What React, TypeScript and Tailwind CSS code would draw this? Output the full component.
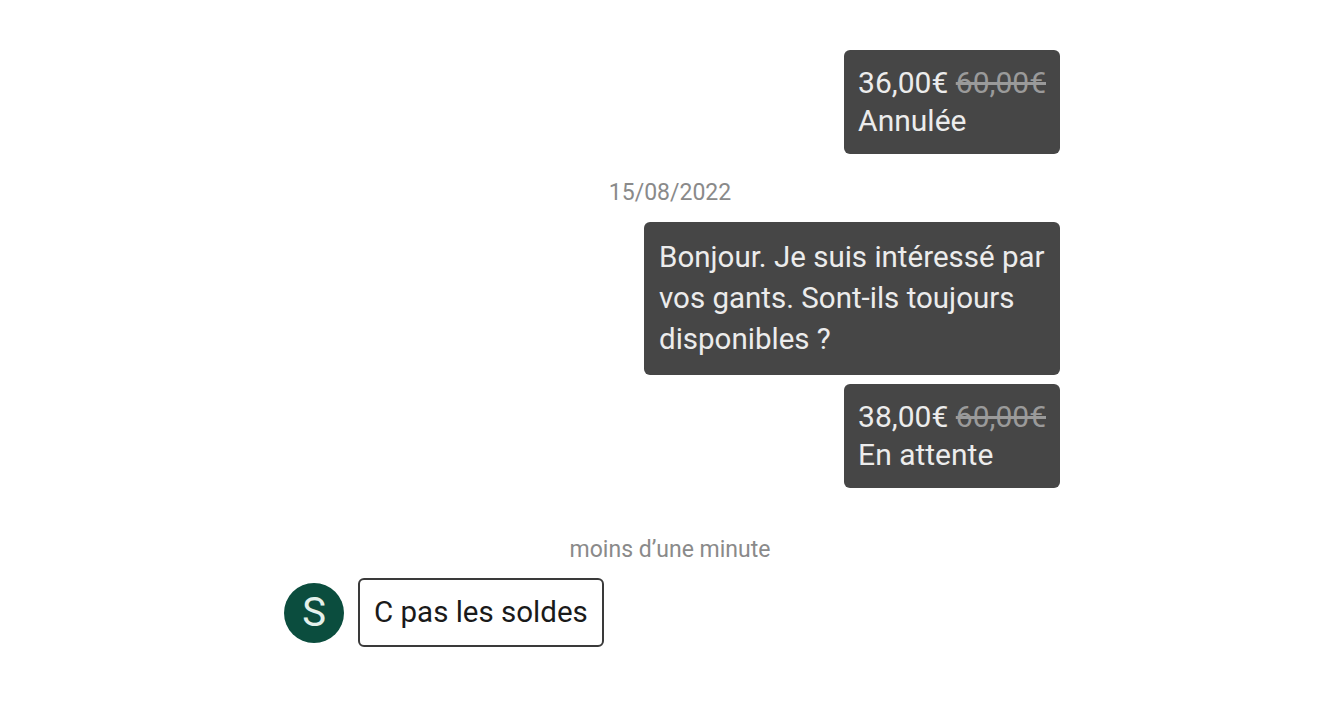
import React from 'react'

const font = { fontFamily: 'Roboto, "Noto Sans", sans-serif' }

function OfferBubble({ price, original, status }: { price: string; original: string; status: string }) {
  return (
    <div className="self-end rounded-md bg-[#464646] px-[14px] py-[14px] text-[30px] leading-[38px] text-[#ececec]">
      <div>
        {price} <span className="text-[#9a9a9a] line-through">{original}</span>
      </div>
      <div>{status}</div>
    </div>
  )
}

export default function App() {
  return (
    <div className="min-h-screen bg-white" style={font}>
      <div className="mx-auto flex w-[780px] flex-col pt-[50px]">
        <OfferBubble price="36,00€" original="60,00€" status="Annulée" />

        <div className="mt-[25px] text-center text-[23px] leading-[28px] text-[#8a8a8a]">15/08/2022</div>

        <div className="mt-[15px] max-w-[416px] self-end rounded-md bg-[#464646] px-[15px] py-[15px] text-[29.5px] leading-[41px] text-[#ececec]">
          Bonjour. Je suis intéressé par vos gants. Sont-ils toujours disponibles ?
        </div>

        <div className="mt-[9px] flex flex-col">
          <OfferBubble price="38,00€" original="60,00€" status="En attente" />
        </div>

        <div className="mt-[48px] text-center text-[23px] leading-[28px] text-[#8a8a8a]">moins d’une minute</div>

        <div className="mt-[14px] flex items-center gap-[14px] pl-[4px]">
          <div className="flex h-[60px] w-[60px] items-center justify-center rounded-full bg-[#0b4d3e] text-[40px] text-[#e4f1ec]">
            S
          </div>
          <div className="rounded-md border-2 border-[#3a3a3a] px-[14px] py-[14px] text-[29.5px] leading-[37px] text-[#1a1a1a]">
            C pas les soldes
          </div>
        </div>
      </div>
    </div>
  )
}
